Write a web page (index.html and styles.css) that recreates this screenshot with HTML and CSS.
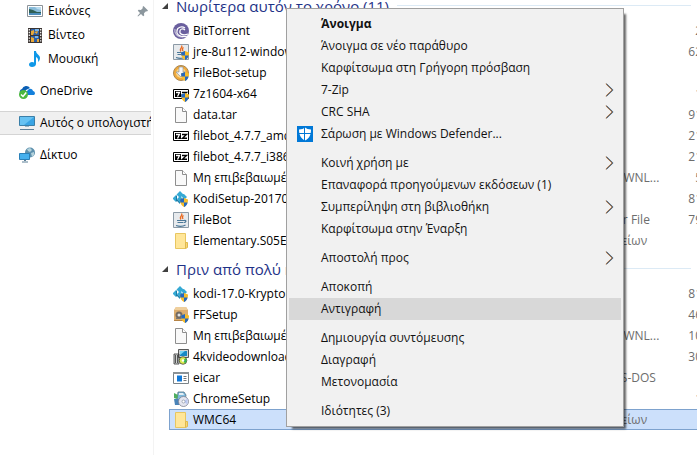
FILE: index.html
```
<!DOCTYPE html>
<html lang="el">
<head>
<meta charset="utf-8">
<title>Λήψεις</title>
<link rel="stylesheet" href="styles.css">
</head>
<body>
<svg class="defs" aria-hidden="true">
  <symbol id="pictures" viewBox="0 0 16 16"><path fill="#fff" stroke="#8b9298" d="M.5 2.5h15v11H.5z"/><path fill="#b9dcf0" d="M2 4h12v5H2z"/><path fill="#5b9cc4" d="M2 4h6l2 2 4 1v2H2z" opacity=".5"/><path fill="#2f5f55" d="M2 6l4 1 4 2h4v1H2z"/><path fill="#4d8dbb" d="M2 10h12v2H2z"/></symbol>
  <symbol id="video" viewBox="0 0 16 16"><path fill="#3a3432" d="M1 1h14v15H1z"/><path fill="#2c5fa8" d="M4 2h8v6H4zM4 9h8v6H4z"/><path fill="#e8a83a" d="M4 4l3-1v3l-1 2H4zM7 5l4-1-1 3zM4 10l3 1v4H4zM10 12h2v3h-2z"/><path fill="#78b4e8" d="M8 2h4v2H8zM8 9h3v2H8z"/><path stroke="#fff" stroke-width="1.2" stroke-dasharray="1.4 1.4" d="M2.3 2v14M13.7 2v14"/></symbol>
  <symbol id="music" viewBox="0 0 16 16"><path fill="#0f98e8" d="M7 0h2c0 3 4 4 4 7 0 2-1 3-2 4 .6-3-.4-4-2-5v7c0 2-2 3-4 3s-3-1-3-2.500 1.500-2.500 3-2.500c1 0 1.500.2 2 .5z"/></symbol>
  <symbol id="onedrive" viewBox="0 0 16 16"><path fill="#0a5fb4" d="M1 10a3 3 0 0 1 2-4 4.500 4.500 0 0 1 8-1l-4 2-2 4z"/><path fill="#1480dc" d="M7 12V9l3-3a3 3 0 0 1 4 2 2.200 2.200 0 0 1 1 4z"/><circle cx="4.500" cy="11.500" r="4.500" fill="#4cb83e"/><path fill="none" stroke="#fff" stroke-width="1.500" d="M2 11.500l2 2 3.200-4"/></symbol>
  <symbol id="computer" viewBox="0 0 16 16"><path fill="#67c2f2" stroke="#3a7fa8" d="M.5 1.500h15v9H.5z"/><path fill="#39a4e4" d="M15 2v8H5z"/><path fill="#9ab4c4" d="M6 11h4v1H6z"/><path fill="#5d8098" d="M1 14h14v1H1z"/></symbol>
  <symbol id="network" viewBox="0 0 16 16"><circle cx="11" cy="5.500" r="5" fill="#5e91ae"/><path fill="#b5d3dc" d="M8 2l3-1 2 2-2 2-2-1zM12 6l3-1v3l-2 2z"/><path fill="#45b0ee" stroke="#2a80b8" d="M.5 6.500h10v6H.5z"/><path fill="#5d8098" d="M5 13h2v1H5zM3 14.500h6v1H3z"/></symbol>
  <symbol id="shield" viewBox="0 0 8 9"><path fill="#f6bd2c" d="M0 1.500L4 0l4 1.500C8 6 6 8 4 9 2 8 0 6 0 1.500z"/><path fill="#2468c0" d="M4 0v4.500H.4L0 1.500zM4 4.500h3.600C7 7 5.500 8.400 4 9z"/></symbol>
  <symbol id="bittorrent" viewBox="0 0 16 16"><circle cx="8" cy="8" r="8" fill="#6a5f9e"/><g fill="none" stroke="#fff" stroke-width="1.200"><path d="M15 13C9 15 3 12 4 8c0-4 5-5 8-3"/><path d="M15 11c-5 2-9 0-8-3 0-2 3-3 5-1"/><path d="M10 14C4 14 1 10 2 6" opacity=".6"/></g></symbol>
  <symbol id="cup" viewBox="0 0 16 16"><path fill="#e7eaed" stroke="#8c9aa6" d="M.5.5h15v15H.5z"/><path fill="none" stroke="#ea6a20" stroke-width="1.300" d="M8.500 1.500c2 2-3 3-.5 6M10.500 3.500c-2 1-1 2-.5 3.500"/><path fill="none" stroke="#4b7898" stroke-width="1.200" d="M4 8.500h7M4.500 10.500h6M11 8.500c3-.5 2 2 0 2M3 13.500c3 1 7 1 9.500-.5"/></symbol>
  <symbol id="java" viewBox="0 0 16 16"><use href="#cup"/><use href="#shield" x="8" y="7" width="8" height="9"/></symbol>
  <symbol id="filebot" viewBox="0 0 16 16"><circle cx="8" cy="8" r="7.500" fill="#f0a93a" stroke="#a98652"/><circle cx="8" cy="8" r="5" fill="#f8d48c"/><path fill="#f7f7f7" stroke="#7e8ca0" stroke-width=".6" d="M6 2h4v5h3l-5 5-5-5h3z"/><use href="#shield" x="8" y="7" width="8" height="9"/></symbol>
  <symbol id="seven" viewBox="0 0 16 16"><path fill="#fff" stroke="#000" d="M.5 3.500h15v9H.5z"/><path fill="#000" d="M2 5h6v6H2z"/><path fill="none" stroke="#fff" stroke-width="1.300" d="M3 6.500h3.500L4.500 10.500"/><path fill="none" stroke="#000" stroke-width="1.400" d="M9 6.500h4.500l-4 3.800H14"/></symbol>
  <symbol id="sevenadmin" viewBox="0 0 16 16"><use href="#seven"/><use href="#shield" x="8" y="7" width="8" height="9"/></symbol>
  <symbol id="page" viewBox="0 0 16 16"><path fill="#f9f9f9" stroke="#8e8e8e" d="M2.500.5h7l4 4v11h-11z"/><path fill="#fff" stroke="#8e8e8e" d="M9.500.5v4h4"/></symbol>
  <symbol id="kodi" viewBox="0 0 16 16"><path fill="#35a9d4" d="M7 0l3.500 3.500L7 7 3.500 3.500zM0 7l3-3v7L0 8zM4 8l3-3 3 3-3 4zM8 4l3-1 3 3-3 3z"/><path fill="#1b7ca8" d="M4 8l3 3.500V13L4 10zM3 4l1 1v5l-1 1z"/><use href="#shield" x="7" y="7" width="8" height="9"/></symbol>
  <symbol id="folder" viewBox="0 0 16 16"><path fill="#ffe699" stroke="#e8c660" d="M2.500.5h10v15h-10z"/><path fill="#f8d775" stroke="#dfb94e" d="M12.500 9.500h2v5l-2 1z"/></symbol>
  <symbol id="box" viewBox="0 0 16 16"><path fill="#dcae70" d="M1 3l2-3h10l2 3v11H1z"/><path fill="#efcf9c" d="M3 0h10l2 3H1z"/><path fill="#b58345" d="M1 13h14v1H1z"/><circle cx="6" cy="8" r="3.500" fill="#736b63"/><circle cx="6" cy="8" r="1.500" fill="#e5e5e5"/><path stroke="#777" d="M3 11.500h6"/><use href="#shield" x="8" y="7" width="8" height="9"/></symbol>
  <symbol id="installer" viewBox="0 0 16 16"><path fill="#d0d4d4" stroke="#333" stroke-width=".8" d="M5.500.5h10v8h-10zM1 5h5v10H1z"/><path fill="#1688c4" d="M7 2h7v5H7z"/><path fill="#77d4f4" d="M7 2h5L7 6z"/><path fill="#555" d="M2 6h1v8H2zM4 6h1v8H4z"/><circle cx="10" cy="11.500" r="3.800" fill="#ddeb50" stroke="#333" stroke-width=".7"/><path fill="#36b556" d="M10 11.500l3-2.500c1 2 1 4-1 5.500z"/><circle cx="10" cy="11.500" r="1.200" fill="#fff"/></symbol>
  <symbol id="console" viewBox="0 0 16 16"><path fill="#fff" stroke="#7b8388" d="M.5 2.500h15v11H.5z"/><path fill="#8b9296" d="M0 2h16v2H0z"/><path fill="#1078d8" d="M4 5.500h5v6H4z"/><path stroke="#777" d="M10.500 6.500h3M10.500 8.500h3M10.500 10.500h3"/></symbol>
  <symbol id="chrome" viewBox="0 0 16 16"><path fill="#7fb9dc" stroke="#527184" stroke-width=".8" d="M5 1h6l2 3-1 6H4z"/><path fill="#e3eef4" d="M6 2h4l1 2H6z"/><path fill="#4fae60" d="M1 2l4 2-1 4-3-1z"/><path fill="#4a84b8" d="M1 8h5v6H2z"/><circle cx="10.500" cy="10.500" r="5" fill="#e5e6f0" stroke="#7c8292" stroke-width=".8"/><path fill="#b9c7f1" d="M10.500 10.500l4-3v6z"/><circle cx="10.500" cy="10.500" r="1.500" fill="#fff" stroke="#8890a0" stroke-width=".7"/></symbol>
  <symbol id="pin" viewBox="0 0 12 12"><path fill="#8c979e" d="M6.500 1l4.500 4.500-1 1-1-.3-2 2 .2 2.300-1 .8L4 9 1 11.500.5 11 3 8 .8 5.800l.8-1 2.300.2 2-2-.4-1z"/></symbol>
  <symbol id="defender" viewBox="0 0 16 16"><path fill="#0078d7" d="M0 0h16v16H0z"/><path fill="#fff" d="M2 3.500Q6 3.500 8 1.500 10 3.500 14 3.500C14 9.500 12 12.500 8 14.500 4 12.500 2 9.500 2 3.500z"/><path stroke="#0078d7" d="M7.500 1v14M1 7.500h14"/></symbol>
  <symbol id="chevron" viewBox="0 0 9 14"><g fill="none"><path stroke="#f0b070" d="M.6.8L7 7 .6 13.200"/><path stroke="#6aaede" d="M1.800.8L8.200 7l-6.400 6.200"/><path stroke="#4a3028" d="M1.200.8L7.600 7l-6.400 6.200"/></g></symbol>
</svg>

<div class="explorer">
  <nav class="sidebar">
    <a class="place child" href="#"><svg class="icon"><use href="#pictures"/></svg><span>Εικόνες</span><svg class="pin"><use href="#pin"/></svg></a>
    <a class="place child" href="#"><svg class="icon"><use href="#video"/></svg><span>Βίντεο</span></a>
    <a class="place child" href="#"><svg class="icon"><use href="#music"/></svg><span>Μουσική</span></a>
    <a class="place root" href="#"><svg class="icon"><use href="#onedrive"/></svg><span>OneDrive</span></a>
    <a class="place root current" href="#"><svg class="icon"><use href="#computer"/></svg><span>Αυτός ο υπολογιστή</span></a>
    <a class="place root" href="#"><svg class="icon"><use href="#network"/></svg><span>Δίκτυο</span></a>
  </nav>

  <main class="files">
    <section class="group">
      <h2 class="group-title">Νωρίτερα αυτόν το χρόνο (11)</h2>
      <ul class="rows">
        <li class="row"><svg class="icon"><use href="#bittorrent"/></svg><span>BitTorrent</span><span class="type"></span><span class="size">2.049 KB</span></li>
        <li class="row"><svg class="icon"><use href="#java"/></svg><span>jre-8u112-windows</span><span class="type"></span><span class="size">62.715 KB</span></li>
        <li class="row"><svg class="icon"><use href="#filebot"/></svg><span>FileBot-setup</span><span class="type"></span><span class="size"></span></li>
        <li class="row"><svg class="icon"><use href="#sevenadmin"/></svg><span>7z1604-x64</span><span class="type"></span><span class="size">1.371 KB</span></li>
        <li class="row"><svg class="icon"><use href="#page"/></svg><span>data.tar</span><span class="type"></span><span class="size">91.310 KB</span></li>
        <li class="row"><svg class="icon"><use href="#seven"/></svg><span>filebot_4.7.7_amd64</span><span class="type"></span><span class="size">21.140 KB</span></li>
        <li class="row"><svg class="icon"><use href="#seven"/></svg><span>filebot_4.7.7_i386</span><span class="type"></span><span class="size">21.120 KB</span></li>
        <li class="row"><svg class="icon"><use href="#page"/></svg><span>Μη επιβεβαιωμένο</span><span class="type">Αρχείο CRDOWNL...</span><span class="size">5.210 KB</span></li>
        <li class="row"><svg class="icon"><use href="#kodi"/></svg><span>KodiSetup-201701</span><span class="type"></span><span class="size">81.460 KB</span></li>
        <li class="row"><svg class="icon"><use href="#cup"/></svg><span>FileBot</span><span class="type">Executable Jar File</span><span class="size">79.120 KB</span></li>
        <li class="row"><svg class="icon"><use href="#folder"/></svg><span>Elementary.S05E10</span><span class="type">Φάκελος αρχείων</span><span class="size"></span></li>
      </ul>
    </section>
    <section class="group">
      <h2 class="group-title">Πριν από πολύ καιρό (7)</h2>
      <ul class="rows">
        <li class="row"><svg class="icon"><use href="#kodi"/></svg><span>kodi-17.0-Krypton</span><span class="type"></span><span class="size">81.510 KB</span></li>
        <li class="row"><svg class="icon"><use href="#box"/></svg><span>FFSetup</span><span class="type"></span><span class="size">46.330 KB</span></li>
        <li class="row"><svg class="icon"><use href="#page"/></svg><span>Μη επιβεβαιωμένο</span><span class="type">Αρχείο CRDOWNL...</span><span class="size">10.240 KB</span></li>
        <li class="row"><svg class="icon"><use href="#installer"/></svg><span>4kvideodownload</span><span class="type"></span><span class="size">30.180 KB</span></li>
        <li class="row"><svg class="icon"><use href="#console"/></svg><span>eicar</span><span class="type">Εφαρμογή MS-DOS</span><span class="size"></span></li>
        <li class="row"><svg class="icon"><use href="#chrome"/></svg><span>ChromeSetup</span><span class="type"></span><span class="size">1.080 KB</span></li>
        <li class="row selected"><svg class="icon"><use href="#folder"/></svg><span>WMC64</span><span class="type">Φάκελος αρχείων</span><span class="size"></span></li>
      </ul>
    </section>
  </main>
</div>

<div class="menu" role="menu">
  <div class="menu-group">
    <button class="item default" role="menuitem"><span class="label">Άνοιγμα</span></button>
    <button class="item" role="menuitem"><span class="label">Άνοιγμα σε νέο παράθυρο</span></button>
    <button class="item" role="menuitem"><span class="label">Καρφίτσωμα στη Γρήγορη πρόσβαση</span></button>
    <button class="item" role="menuitem"><span class="label">7-Zip</span><svg class="chevron"><use href="#chevron"/></svg></button>
    <button class="item" role="menuitem"><span class="label">CRC SHA</span><svg class="chevron"><use href="#chevron"/></svg></button>
    <button class="item" role="menuitem"><svg class="icon"><use href="#defender"/></svg><span class="label">Σάρωση με Windows Defender...</span></button>
  </div>
  <div class="menu-group">
    <button class="item" role="menuitem"><span class="label">Κοινή χρήση με</span><svg class="chevron"><use href="#chevron"/></svg></button>
    <button class="item" role="menuitem"><span class="label">Επαναφορά προηγούμενων εκδόσεων (1)</span></button>
    <button class="item" role="menuitem"><span class="label">Συμπερίληψη στη βιβλιοθήκη</span><svg class="chevron"><use href="#chevron"/></svg></button>
    <button class="item" role="menuitem"><span class="label">Καρφίτσωμα στην Έναρξη</span></button>
  </div>
  <div class="menu-group">
    <button class="item" role="menuitem"><span class="label">Αποστολή προς</span><svg class="chevron"><use href="#chevron"/></svg></button>
  </div>
  <div class="menu-group">
    <button class="item" role="menuitem"><span class="label">Αποκοπή</span></button>
    <button class="item active" role="menuitem"><span class="label">Αντιγραφή</span></button>
  </div>
  <div class="menu-group">
    <button class="item" role="menuitem"><span class="label">Δημιουργία συντόμευσης</span></button>
    <button class="item" role="menuitem"><span class="label">Διαγραφή</span></button>
    <button class="item" role="menuitem"><span class="label">Μετονομασία</span></button>
  </div>
  <div class="menu-group">
    <button class="item" role="menuitem"><span class="label">Ιδιότητες (3)</span></button>
  </div>
</div>
</body>
</html>
```
FILE: styles.css
```
* {
  box-sizing: border-box;
}

body {
  margin: 0;
  overflow: hidden;
  background: #fff;
  color: #000;
  font: 12px/20px "Open Sans", "Noto Sans", sans-serif;
}

.defs {
  display: none;
}

.icon {
  flex: none;
  width: 16px;
  height: 16px;
}

.explorer {
  display: flex;
  height: 100vh;
}

/* Navigation pane */
.sidebar {
  flex: none;
  width: 154px;
  margin-top: -1px;
  padding-right: 2px;
  border-right: 1px solid #f3f3f3;
}

.place {
  display: flex;
  align-items: center;
  gap: 5px;
  height: 24px;
  overflow: hidden;
  color: #000;
  text-decoration: none;
  white-space: nowrap;
}

.child {
  padding-left: 27px;
}

.root {
  margin-top: 8px;
  padding-left: 19px;
}

.current {
  background: #f0f0f0;
  border: solid #d4d4d4;
  border-width: 1px 0;
}

.pin {
  flex: none;
  width: 12px;
  height: 12px;
  margin: 0 2px 0 auto;
}

/* File list, scrolled a little below its top */
.files {
  flex: 1;
  min-width: 0;
  margin-top: -9px;
  padding-left: 8px;
  overflow: hidden;
}

.group-title {
  display: flex;
  align-items: center;
  gap: 8px;
  height: 29px;
  margin: 0;
  padding-right: 6px;
  color: #1e3287;
  font-size: 15px;
  font-weight: 400;
  white-space: nowrap;
}

.group-title::before {
  border: solid transparent;
  border-width: 0 0 6px 6px;
  border-bottom-color: #404040;
  content: "";
}

.group-title::after {
  flex: 1;
  height: 1px;
  background: #dceaf5;
  content: "";
}

.rows {
  margin: 0 0 3px;
  padding: 0 0 0 7px;
  list-style: none;
}

.row {
  display: grid;
  grid-template-columns: 16px 352px 112px 79px;
  column-gap: 4px;
  align-items: center;
  height: 21px;
  padding-left: 4px;
  white-space: nowrap;
}

.selected {
  background: #cce0fb;
  border: solid #7da2ce;
  border-width: 1px 0 1px 1px;
  padding-left: 3px;
}

.type,
.size {
  color: #6d6d6d;
}

.size {
  text-align: right;
}

/* Context menu */
.menu {
  position: absolute;
  top: 8px;
  left: 286px;
  width: 338px;
  padding: 4px 2px;
  background: #f1f1f1;
  border: 1px solid #a0a0a0;
  box-shadow: 4px 4px 2px -2px rgba(0, 0, 0, 0.6);
}

.menu-group + .menu-group {
  margin-top: 7px;
}

.item {
  display: grid;
  grid-template-columns: 16px 1fr 9px;
  column-gap: 8px;
  align-items: center;
  width: 100%;
  height: 22px;
  padding: 0 7px 0 8px;
  background: none;
  border: 0;
  color: #111;
  font: inherit;
  text-align: left;
  white-space: nowrap;
}

.label {
  grid-column: 2;
}

.default {
  font-weight: 700;
}

.active {
  background: #d8d8d8;
}

.chevron {
  width: 9px;
  height: 14px;
}
```
